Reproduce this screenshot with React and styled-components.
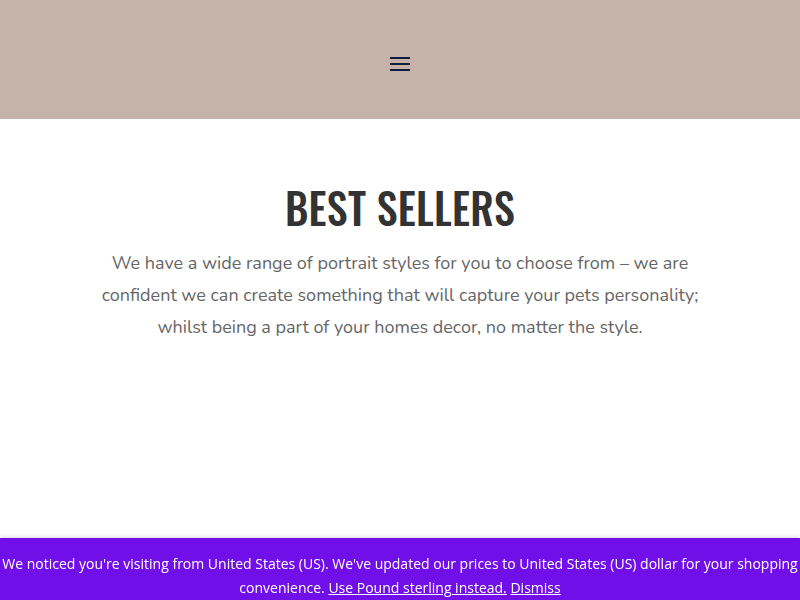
import React from 'react';
import styled, { createGlobalStyle } from 'styled-components';

const GlobalStyle = createGlobalStyle`
  html, body {
    margin: 0;
    padding: 0;
    background: #ffffff;
  }
  body {
    font-family: "Open Sans", sans-serif;
  }
`;

const App = () => {
  return (
    <Page>
      <GlobalStyle />
      <Header>
        <MenuButton aria-label="Menu">
          <MenuBar />
          <MenuBar />
          <MenuBar />
        </MenuButton>
      </Header>
      <Section>
        <Title>BEST SELLERS</Title>
        <Intro>
          We have a wide range of portrait styles for you to choose from – we are
          confident we can create something that will capture your pets personality;
          whilst being a part of your homes decor, no matter the style.
        </Intro>
      </Section>
      <Notice>
        We noticed you're visiting from United States (US). We've updated our prices to
        United States (US) dollar for your shopping convenience.{' '}
        <NoticeLink href="#">Use Pound sterling instead.</NoticeLink>{' '}
        <NoticeLink href="#">Dismiss</NoticeLink>
      </Notice>
    </Page>
  );
}

const Page = styled.div`
  min-height: 600px;
`;

const Header = styled.header`
  display: flex;
  align-items: center;
  justify-content: center;
  height: 119px;
  background: #c5b3a9;
`;

const MenuButton = styled.button`
  display: flex;
  flex-direction: column;
  gap: 4px;
  width: 20px;
  padding: 0;
  margin-top: 9px;
  border: none;
  background: transparent;
  cursor: pointer;
`;

const MenuBar = styled.span`
  display: block;
  height: 2px;
  width: 20px;
  background: #0f1a3c;
`;

const Section = styled.section`
  display: flex;
  flex-direction: column;
  align-items: center;
  padding: 61px 20px 0;
`;

const Title = styled.h2`
  margin: 0;
  font-family: "Oswald", "DejaVu Sans Condensed", sans-serif;
  font-weight: 500;
  font-size: 42px;
  line-height: 54px;
  letter-spacing: 0.3px;
  color: #333333;
`;

const Intro = styled.p`
  max-width: 620px;
  margin: 13px 0 0;
  text-align: center;
  font-family: "Nunito", "Noto Sans", sans-serif;
  font-size: 18px;
  line-height: 32px;
  color: #666666;
`;

const Notice = styled.div`
  position: fixed;
  left: 0;
  right: 0;
  bottom: 0;
  padding: 14px 0 0;
  background: #710fe9;
  box-shadow: 0 -1px 4px rgba(0, 0, 0, 0.15);
  text-align: center;
  font-family: "Open Sans", sans-serif;
  font-size: 14px;
  line-height: 24px;
  color: #ffffff;
`;

const NoticeLink = styled.a`
  color: #ffffff;
  text-decoration: underline;
`;

export default App;
